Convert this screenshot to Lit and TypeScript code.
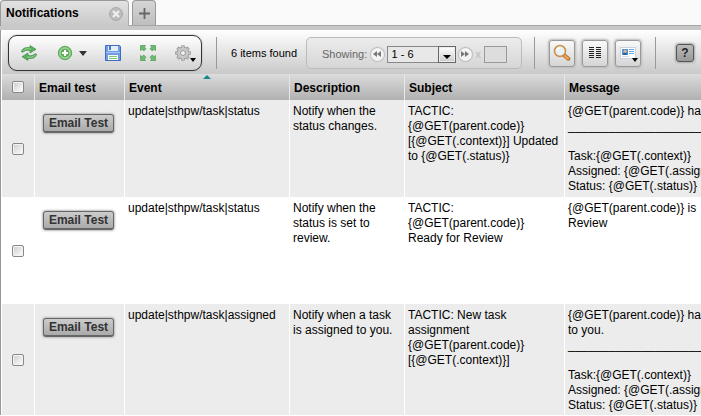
import { LitElement, html, css } from "lit";
import { customElement, state } from "lit/decorators.js";

interface Notification {
  event: string;
  description: string;
  subject: string[];
  message: string[];
  size: string;
}

const RULE = "_".repeat(40);
const DETAILS = ["Task:{@GET(.context)}", "Assigned: {@GET(.assigned)}", "Status: {@GET(.status)}"];

const ROWS: Notification[] = [
  {
    event: "update|sthpw/task|status",
    description: "Notify when the status changes.",
    subject: ["TACTIC:", "{@GET(parent.code)}", "[{@GET(.context)}] Updated", "to {@GET(.status)}"],
    message: ["{@GET(parent.code)} has been updated", RULE, "", ...DETAILS],
    size: "short",
  },
  {
    event: "update|sthpw/task|status",
    description: "Notify when the status is set to review.",
    subject: ["TACTIC:", "{@GET(parent.code)}", "Ready for Review"],
    message: ["{@GET(parent.code)} is", "Review"],
    size: "medium",
  },
  {
    event: "update|sthpw/task|assigned",
    description: "Notify when a task is assigned to you.",
    subject: ["TACTIC: New task", "assignment", "{@GET(parent.code)}", "[{@GET(.context)}]"],
    message: ["{@GET(parent.code)} has been assigned", "to you.", RULE, "", ...DETAILS],
    size: "tall",
  },
];

const refreshIcon = html`<svg width="18" height="16" viewBox="0 0 18 16">
  <g fill="#5cb05c" stroke="#3d8a45" stroke-width=".7" stroke-linejoin="round">
    <path d="M1.500 7 C2 3.500 5 2 10 2.700 L10 .6 L16 4.300 L10 8 L10 5.600 C6.500 5 4.500 5.300 3.600 7Z" />
    <path d="M16.500 9 C16 12.500 13 14 8 13.300 L8 15.400 L2 11.700 L8 8 L8 10.400 C11.500 11 13.500 10.700 14.400 9Z" />
  </g>
  <path d="M3 6 C4.500 3.500 7 3.500 11 4 M15 10 C13.500 12.500 11 12.500 7 12" fill="none" stroke="#9ad69a" stroke-width=".9" />
</svg>`;

const addIcon = html`<svg width="16" height="16" viewBox="0 0 16 16">
  <circle cx="8" cy="8" r="6.700" fill="#7cc478" stroke="#5aa85a" />
  <circle cx="8" cy="8" r="4.900" fill="#5cae5a" stroke="#c4e8c0" stroke-width=".8" />
  <path d="M8 5v6M5 8h6" stroke="#fff" stroke-width="2" />
</svg>`;

const saveIcon = html`<svg width="16" height="16" viewBox="0 0 16 16">
  <path d="M.5 .5h14l1 1v14H.5z" fill="#6f9ce8" stroke="#3f6cc0" />
  <rect x="3" y="1" width="10" height="5" fill="#e4eefb" />
  <rect x="4" y="1" width="2" height="4" fill="#4a78c8" />
  <path d="M1 7.500h14" stroke="#a9c6f5" />
  <rect x="3" y="10" width="10" height="5" fill="#f6fff2" />
  <path d="M4 11.500h8M4 13.500h8" stroke="#85c47c" />
</svg>`;

const expandIcon = html`<svg width="16" height="16" viewBox="0 0 16 16">
  <g fill="#6cba6c" stroke="#4a9a50" stroke-width=".7" stroke-linejoin="round">
    <path d="M.5 .5h5L4.300 2 6 3.700 3.700 6 2 4.300 .5 5.500z" />
    <path d="M15.500 .5h-5L11.700 2 10 3.700 12.300 6 14 4.300 15.500 5.500z" />
    <path d="M.5 15.500h5L4.300 14 6 12.300 3.700 10 2 11.700 .5 10.500z" />
    <path d="M15.500 15.500h-5L11.700 14 10 12.300 12.300 10 14 11.700 15.500 10.500z" />
  </g>
</svg>`;

const gearIcon = html`<svg width="18" height="18" viewBox="0 0 18 18">
  <path d="M9 1.200v15.600M1.200 9h15.600M3.500 3.500l11 11M14.500 3.500l-11 11" stroke="#9a9a9a" stroke-width="3.400" />
  <circle cx="9" cy="9" r="5.800" fill="#cacaca" stroke="#9a9a9a" />
  <path d="M9 2v14M2 9h14M4 4l10 10M14 4L4 14" stroke="#cacaca" stroke-width="1.700" />
  <circle cx="9" cy="9" r="2.500" fill="#f1f1f1" stroke="#999" />
</svg>`;

const searchIcon = html`<svg width="18" height="18" viewBox="0 0 18 18">
  <path d="M11.500 11.500l3.800 3.300" stroke="#b5702c" stroke-width="4" stroke-linecap="round" />
  <path d="M12 12l3 2.600" stroke="#eba95c" stroke-width="2.200" stroke-linecap="round" />
  <circle cx="7" cy="7" r="5.500" fill="#e6f1f8" stroke="#d08c42" stroke-width="1.500" />
  <path d="M4 6.500a3 3 0 0 1 3-2.500" stroke="#fff" stroke-width="1.500" fill="none" />
</svg>`;

const columnsIcon = html`<svg width="12" height="12" viewBox="0 0 12 12">
  <path d="M0 .5h5M0 2.500h5M0 4.500h5M0 6.500h5M0 8.500h5M0 10.500h5M7 .5h5M7 2.500h5M7 4.500h5M7 6.500h5M7 8.500h5M7 10.500h5" stroke="#222" />
</svg>`;

const cardIcon = html`<svg width="16" height="12" viewBox="0 0 16 12">
  <rect x=".5" y=".5" width="15" height="11" fill="#fff" stroke="#c9d3df" />
  <rect x="2" y="2" width="6" height="6" fill="#4d95d8" />
  <path d="M3 8c0-2 1-2.500 2-2.500S7 6 7 8z" fill="#2d5f9c" />
  <circle cx="5" cy="4.300" r="1.500" fill="#f0b27a" />
  <path d="M9 2.500h5M9 4.500h5M9 6.500h5" stroke="#6ea7de" />
  <path d="M2 9.500h7" stroke="#d4dbe4" />
</svg>`;

const previousIcon = html`<svg width="8" height="6" viewBox="0 0 8 6"><path d="M4 0v6L0 3zM8 0v6L4 3z" fill="#777" /></svg>`;
const nextIcon = html`<svg width="8" height="6" viewBox="0 0 8 6"><path d="M0 0v6l4-3zM4 0v6l4-3z" fill="#777" /></svg>`;

@customElement("app-root")
export class AppRoot extends LitElement {
  static styles = css`
    :host {
      display: block;
      min-height: 100vh;
      overflow: hidden;
      background: #fff;
      color: #000;
      font: 12px/15px "Liberation Sans", Arial, sans-serif;
    }
    * { box-sizing: border-box; }
    button, select, input { font: inherit; color: inherit; margin: 0; padding: 0; border-radius: 0; }
    button { border: 0; background: none; display: flex; align-items: center; justify-content: center; }
    svg { display: block; flex: none; }

    .tabs {
      display: flex;
      gap: 3px;
      height: 30px;
      background: linear-gradient(#fafafa 25px, #a5a5a5 25px, #a5a5a5 26px, #c9c8c9 26px);
    }
    .tab {
      display: flex;
      align-items: center;
      border: 1px solid #999;
      border-bottom: 0;
      border-radius: 4px 4px 0 0;
      height: 25px;
      background: linear-gradient(#d6d6d6, #bebebe);
    }
    .active {
      width: 129px;
      height: 26px;
      padding: 0 5px;
      justify-content: space-between;
      border-right-color: #aaa;
      background: linear-gradient(#e2e2e2, #c9c8c9);
      font-weight: bold;
    }
    .close { width: 14px; height: 14px; }
    .new { width: 24px; justify-content: center; }

    .panel { border-left: 1px solid #999; padding-left: 1px; }
    .toolbar {
      display: flex;
      align-items: center;
      height: 44px;
      padding: 2px 0 0 6px;
      background: linear-gradient(#fff, #c9c9c9);
      font-size: 11px;
      white-space: nowrap;
    }
    .toolbar > * { flex: none; }
    .group {
      display: flex;
      align-items: center;
      width: 194px;
      height: 36px;
      padding: 0 9px 0 11px;
      border: 1px solid #333;
      border-radius: 9px;
      background: linear-gradient(#fff, #d2d2d2);
      box-shadow: 0 0 2px #aaa;
      justify-content: space-between;
    }
    .with-menu { gap: 6px; }
    .corner { position: relative; }
    .caret {
      border: 4px solid transparent;
      border-top: 5px solid #333;
      border-bottom: 0;
    }
    .corner .caret { position: absolute; right: -4px; bottom: 0; border-width: 4px 3px 0; border-top-color: #000; }
    .tool.corner .caret { right: 2px; bottom: 4px; }
    .divider { width: 1px; height: 32px; background: #999; margin: 0 14px; }
    .count { width: 75px; }
    .pager {
      display: flex;
      align-items: center;
      width: 216px;
      height: 32px;
      padding: 2px 14px 0 15px;
      border: 1px solid #bbb;
      border-radius: 5px;
      color: #666;
      background: linear-gradient(#ececec, #d6d6d6);
    }
    .showing { flex: 1; }
    .round {
      width: 13px;
      height: 13px;
      border-radius: 7px;
      background: #f4f4f4;
      box-shadow: 0 0 1px 1px #bbb;
    }
    .range { position: relative; margin: 0 3px; }
    .range select {
      appearance: none;
      display: block;
      width: 69px;
      height: 17px;
      padding-left: 4px;
      border: 1px solid #888;
      background: #e8e8e8;
      color: #000;
    }
    .drop {
      position: absolute;
      right: 0;
      top: 0;
      width: 18px;
      height: 17px;
      border: 1px solid #666;
      background: linear-gradient(#fff, #ccc);
      box-shadow: inset 0 0 0 1px #eee;
      pointer-events: none;
      display: grid;
      place-content: end center;
      padding-bottom: 3px;
    }
    .drop .caret { border-width: 4px 4px 0; border-top-color: #000; }
    .times { color: #bbb; padding: 0 3px 0 4px; }
    .size { width: 23px; height: 17px; border: 1px solid #999; background: #ddd; }
    .pager + .divider { margin: 0 14px 0 12px; }
    .tools { display: flex; gap: 7px; }
    .tool {
      width: 26px;
      height: 27px;
      border: 1px solid #999;
      border-radius: 3px;
      background: linear-gradient(#fafafa, #d4d4d4);
      box-shadow: 0 0 2px 1px #bbb;
    }
    .help {
      width: 18px;
      height: 18px;
      margin-left: 6px;
      border: 1px solid #555;
      border-radius: 3px;
      background: linear-gradient(#bbb, #999);
      box-shadow: 0 0 2px 1px #aaa;
      color: #222;
      font-size: 12px;
      font-weight: bold;
    }

    table { table-layout: fixed; width: max(100%, 863px); border-collapse: separate; border-spacing: 0; }
    .c-check { width: 33px; }
    .c-email { width: 90px; }
    .c-event { width: 165px; }
    .c-description { width: 115px; }
    .c-subject { width: 160px; }
    th {
      position: relative;
      height: 26px;
      padding: 2px 4px 0;
      text-align: left;
      border-right: 1px solid #e8e8e8;
      background: linear-gradient(#dcdcdc, #b0b0b0);
    }
    .sorted::after {
      content: "";
      position: absolute;
      left: calc(50% - 4px);
      top: 1px;
      border: 4px solid transparent;
      border-top: 0;
      border-bottom-color: #168a8a;
    }
    td { padding: 4px 3px 2px; vertical-align: top; border-right: 1px solid #fff; }
    tbody tr:nth-child(odd) { background: #ececec; }
    .short td { height: 97px; }
    .medium td { height: 107px; }
    .tall td { height: 111px; }
    .line { min-height: 15px; white-space: nowrap; }
    .select-cell { padding: 0; text-align: center; vertical-align: middle; }
    .select-cell input {
      appearance: none;
      display: block;
      width: 12px;
      height: 12px;
      margin: 0 auto;
      border: 1px solid #888;
      border-radius: 2px;
      background: linear-gradient(135deg, #ccc, #fff);
      box-shadow: inset 0 0 0 1px #f4f4f4;
    }
    .select-cell input:checked { background: #168a8a; }
    .email {
      width: 71px;
      height: 19px;
      margin: 10px 0 0 5px;
      border: 1px solid #666;
      border-bottom-width: 2px;
      border-radius: 3px;
      background: linear-gradient(#ccc, #aaa);
      box-shadow: 0 0 2px 1px #bbb;
      color: #333;
      font-weight: bold;
      white-space: nowrap;
    }
  `;

  @state() private selected = new Set<number>();

  private toggle(index: number) {
    const next = new Set(this.selected);
    next.has(index) ? next.delete(index) : next.add(index);
    this.selected = next;
  }

  private toggleAll(event: Event) {
    const on = (event.target as HTMLInputElement).checked;
    this.selected = new Set(on ? ROWS.map((_, i) => i) : []);
  }

  private renderTabs() {
    return html`<nav class="tabs">
      <div class="tab active">
        <span>Notifications</span>
        <button class="close" aria-label="Close tab">
          <svg width="14" height="14" viewBox="0 0 14 14">
            <circle cx="7" cy="7" r="6.500" fill="#bbb" stroke="#aaa" />
            <path d="M4 4l6 6M10 4l-6 6" stroke="#eee" stroke-width="2.400" />
          </svg>
        </button>
      </div>
      <button class="tab new" aria-label="New tab">
        <svg width="11" height="11" viewBox="0 0 11 11"><path d="M5.500 0v11M0 5.500h11" stroke="#666" stroke-width="1.800" /></svg>
      </button>
    </nav>`;
  }

  private renderToolbar() {
    return html`<div class="toolbar">
      <div class="group">
        <button aria-label="Refresh">${refreshIcon}</button>
        <button class="with-menu" aria-label="Add">${addIcon}<span class="caret"></span></button>
        <button aria-label="Save">${saveIcon}</button>
        <button aria-label="Expand">${expandIcon}</button>
        <button class="corner" aria-label="Settings">${gearIcon}<span class="caret"></span></button>
      </div>
      <span class="divider"></span>
      <span class="count">6 items found</span>
      <div class="pager">
        <label class="showing" for="range">Showing:</label>
        <button class="round" aria-label="Previous">${previousIcon}</button>
        <span class="range">
          <select id="range"><option>1 - 6</option></select>
          <span class="drop"><span class="caret"></span></span>
        </span>
        <button class="round" aria-label="Next">${nextIcon}</button>
        <label class="times" for="size">x</label>
        <input class="size" id="size" type="text" />
      </div>
      <span class="divider"></span>
      <div class="tools">
        <button class="tool" aria-label="Search">${searchIcon}</button>
        <button class="tool" aria-label="Columns">${columnsIcon}</button>
        <button class="tool corner" aria-label="Views">${cardIcon}<span class="caret"></span></button>
      </div>
      <span class="divider"></span>
      <button class="help" aria-label="Help">?</button>
    </div>`;
  }

  private renderLines(lines: string[]) {
    return lines.map((line) => html`<div class="line">${line}</div>`);
  }

  private renderRow(row: Notification, index: number) {
    return html`<tr class=${row.size}>
      <td class="select-cell">
        <input type="checkbox" aria-label="Select row" .checked=${this.selected.has(index)} @change=${() => this.toggle(index)} />
      </td>
      <td><button class="email">Email Test</button></td>
      <td>${row.event}</td>
      <td>${row.description}</td>
      <td>${this.renderLines(row.subject)}</td>
      <td>${this.renderLines(row.message)}</td>
    </tr>`;
  }

  render() {
    return html`
      ${this.renderTabs()}
      <main class="panel">
        ${this.renderToolbar()}
        <table>
          <colgroup>
            <col class="c-check" /><col class="c-email" /><col class="c-event" />
            <col class="c-description" /><col class="c-subject" /><col />
          </colgroup>
          <thead>
            <tr>
              <th class="select-cell"><input type="checkbox" aria-label="Select all" @change=${this.toggleAll} /></th>
              <th>Email test</th>
              <th class="sorted">Event</th>
              <th>Description</th>
              <th>Subject</th>
              <th>Message</th>
            </tr>
          </thead>
          <tbody>
            ${ROWS.map((row, index) => this.renderRow(row, index))}
          </tbody>
        </table>
      </main>
    `;
  }
}
